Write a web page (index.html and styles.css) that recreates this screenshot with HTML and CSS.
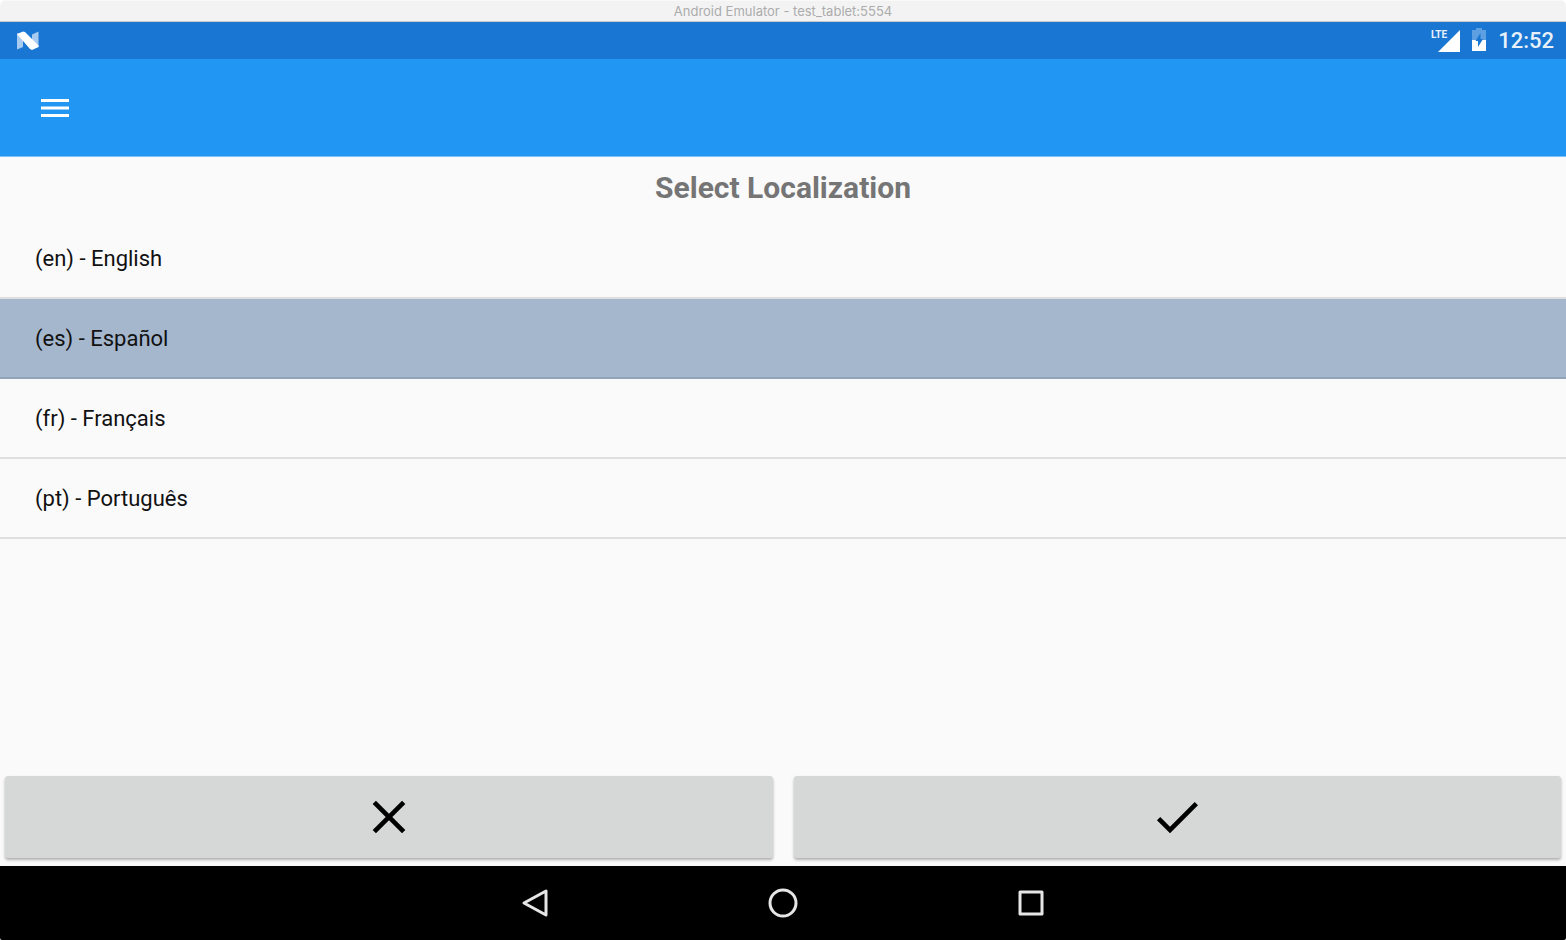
FILE: index.html
```html
<!DOCTYPE html>
<html lang="en">
<head>
<meta charset="utf-8">
<title>Select Localization</title>
<link rel="stylesheet" href="styles.css">
</head>
<body>
<div class="window">
  <header class="titlebar">Android Emulator - test_tablet:5554</header>
  <div class="statusbar">
    <svg class="logo" viewBox="0 0 24 20" width="24" height="20" aria-hidden="true">
      <path d="M1 2 7 5V16L1 18.500ZM16 3.500 22.500 .5V16L16 18Z" fill="#a9cbf0"/>
      <path d="M1 3 7 .5 9 1 22.500 14.500V16L16 19 14 18Z" fill="#fff"/>
    </svg>
    <div class="indicators">
      <div class="signal">
        <span class="lte">LTE</span>
        <svg viewBox="0 0 22 22" width="22" height="22" aria-hidden="true"><path d="M22 0V22H0Z" fill="#fff"/></svg>
      </div>
      <svg class="battery" viewBox="0 0 14 26" width="14" height="26" aria-hidden="true">
        <path d="M4 0H10V2H14V12H0V2H4Z" fill="#5e9fe2"/>
        <path d="M0 12H14V23H0Z" fill="#fff"/>
        <path d="M8.500 5V11H11L6 19V13H3.500Z" fill="#1976d2"/>
      </svg>
      <time class="clock">12:52</time>
    </div>
  </div>
  <div class="appbar">
    <button class="menu" type="button" aria-label="Menu">
      <svg viewBox="0 0 28 20" width="28" height="20" aria-hidden="true"><path d="M0 1H28V4H0ZM0 8.500H28V11.500H0ZM0 16H28V19H0Z" fill="#fff"/></svg>
    </button>
  </div>
  <main class="content">
    <h1 class="heading">Select Localization</h1>
    <ul class="languages">
      <li><button class="language" type="button">(en) - English</button></li>
      <li><button class="language selected" type="button" aria-pressed="true">(es) - Español</button></li>
      <li><button class="language" type="button">(fr) - Français</button></li>
      <li><button class="language" type="button">(pt) - Português</button></li>
    </ul>
    <div class="actions">
      <button class="action" type="button" aria-label="Cancel">
        <svg viewBox="0 0 24 24" width="56" height="56" aria-hidden="true"><path d="M19 6.41 17.59 5 12 10.59 6.41 5 5 6.41 10.59 12 5 17.59 6.41 19 12 13.41 17.59 19 19 17.59 13.41 12Z"/></svg>
      </button>
      <button class="action" type="button" aria-label="Confirm">
        <svg viewBox="0 0 24 24" width="56" height="56" aria-hidden="true"><path d="M9 16.17 4.83 12 3.41 13.41 9 19 21 7 19.59 5.59Z"/></svg>
      </button>
    </div>
  </main>
  <nav class="navbar" aria-label="System">
    <button type="button" aria-label="Back"><svg viewBox="0 0 32 32" width="32" height="32" aria-hidden="true"><path d="M27 4V28L5 16Z"/></svg></button>
    <button type="button" aria-label="Home"><svg viewBox="0 0 32 32" width="32" height="32" aria-hidden="true"><circle cx="16" cy="16" r="13"/></svg></button>
    <button type="button" aria-label="Recent apps"><svg viewBox="0 0 32 32" width="32" height="32" aria-hidden="true"><path d="M5 5H27V27H5Z"/></svg></button>
  </nav>
</div>
</body>
</html>
```
FILE: styles.css
```css
* {
  box-sizing: border-box;
}

body {
  margin: 0;
  background: #fff;
  font-family: Roboto, "Liberation Sans", sans-serif;
}

button {
  margin: 0;
  padding: 0;
  border: 0;
  background: none;
  font: inherit;
  color: inherit;
}

svg {
  display: block;
}

.window {
  display: flex;
  flex-direction: column;
  min-height: 100vh;
  overflow: hidden;
  border-radius: 6px 6px 2px 2px;
}

.titlebar {
  height: 22px;
  border-top: 1px solid #f9f9f9;
  border-bottom: 1px solid #c8c8c8;
  background: #f3f3f3;
  color: #acacac;
  font-family: Inter, sans-serif;
  font-size: 13px;
  line-height: 21px;
  text-align: center;
}

.statusbar {
  display: flex;
  align-items: center;
  justify-content: space-between;
  height: 37px;
  padding: 0 12px 0 16px;
  background: #1976d2;
}

.indicators {
  display: flex;
  align-items: center;
  gap: 12px;
}

.signal {
  position: relative;
}

.lte {
  position: absolute;
  right: 13px;
  top: 0;
  color: #e8f1fb;
  font-size: 10px;
  font-weight: 700;
  line-height: 10px;
}

.clock {
  color: #e8f1fb;
  font-size: 22px;
  font-weight: 500;
  line-height: 36px;
}

.appbar {
  display: flex;
  align-items: center;
  height: 98px;
  padding: 0 41px;
  border-bottom: 1px solid #7cc0f8;
  background: #2196f3;
}

.content {
  display: flex;
  flex: 1;
  flex-direction: column;
  background: #fafafa;
}

.heading {
  margin: 0;
  padding: 11px 0;
  color: #757575;
  font-size: 30px;
  font-weight: 700;
  line-height: 40px;
  text-align: center;
}

.languages {
  margin: 0;
  padding: 0;
  list-style: none;
}

.language {
  display: block;
  width: 100%;
  padding: 25px 35px 24px;
  border-bottom: 2px solid #dfdfdf;
  color: #111;
  font-size: 22px;
  line-height: 29px;
  text-align: left;
}

.selected {
  border-color: #91a3b8;
  background: #a5b7cd;
}

.actions {
  display: grid;
  grid-template-columns: 1fr 1fr;
  gap: 21px;
  margin-top: auto;
  padding: 8px 5px;
}

.action {
  display: flex;
  align-items: center;
  justify-content: center;
  height: 82px;
  border-radius: 3px;
  background: #d6d8d7;
  box-shadow: 0 2px 3px rgba(0, 0, 0, 0.3);
}

.navbar {
  display: flex;
  align-items: center;
  justify-content: center;
  gap: 216px;
  height: 74px;
  background: #000;
}

.navbar svg {
  fill: none;
  stroke: #e6e6e6;
  stroke-width: 3;
  stroke-linejoin: round;
}
```
